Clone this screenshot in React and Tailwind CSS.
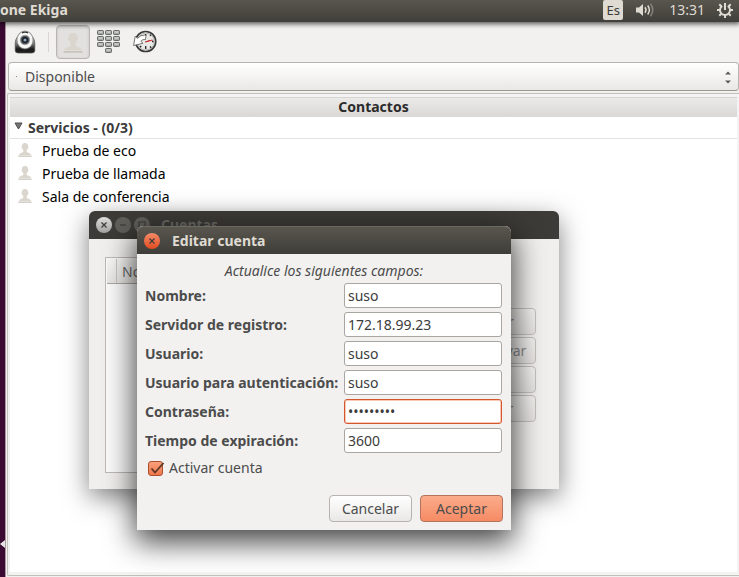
import React from "react";

function Webcam() {
  return (
    <svg width="22" height="24" viewBox="0 0 22 24" aria-hidden="true">
      <defs>
        <linearGradient id="camBase" x1="0" y1="0" x2="0" y2="1">
          <stop offset="0" stopColor="#c8c8c6" />
          <stop offset="0.35" stopColor="#8a8a88" />
          <stop offset="0.75" stopColor="#1a1a1a" />
          <stop offset="1" stopColor="#222" />
        </linearGradient>
        <radialGradient id="camBody">
          <stop offset="0.5" stopColor="#fff" />
          <stop offset="0.85" stopColor="#f4f4f2" />
          <stop offset="1" stopColor="#c4c4c2" />
        </radialGradient>
      </defs>
      <path d="M3.500 7h15q2.300 2.500 2.300 6v7.500q0 2.500-3 2.500H4.200q-3 0-3-2.500V13q0-3.500 2.300-6z" fill="url(#camBase)" stroke="#555" strokeWidth=".7" />
      <ellipse cx="11" cy="10" rx="8.200" ry="9" fill="url(#camBody)" stroke="#777" strokeWidth=".7" />
      <circle cx="11" cy="10" r="4.800" fill="#50565c" stroke="#aaa" strokeWidth=".8" />
      <circle cx="11" cy="10" r="3" fill="#151b22" />
      <circle cx="11" cy="10" r="1.600" fill="#8fa6bd" />
      <path d="M8 2.800q3-1.300 6 0" fill="none" stroke="#333" strokeWidth="1.300" />
    </svg>
  );
}

function Person({ size }) {
  return (
    <svg width={size} height={size} viewBox="0 0 20 20" aria-hidden="true">
      <path
        d="M10 0c-3.200 0-4.600 2-4.500 4.800-.9.700-.4 2.400.4 2.700.3 1.400.9 2.400 1.700 3v2.200c-1.600 1.400-5.600 1.300-6.300 4.300h17.400c-.7-3-4.700-2.900-6.300-4.300v-2.200c.8-.6 1.400-1.600 1.700-3 .8-.3 1.300-2 .4-2.700C14.600 2 13.200 0 10 0z"
        fill="#dad5cd"
      />
      <path d="M.5 18.800h19" stroke="#c8c3bb" strokeWidth="1.800" />
    </svg>
  );
}

function Keypad() {
  const keys = [];
  for (let r = 0; r < 3; r++) for (let c = 0; c < 3; c++) keys.push([c * 8 + 0.5, r * 6 + 0.5]);
  keys.push([8.5, 18.5]);
  return (
    <svg width="24" height="24" viewBox="0 0 24 24" aria-hidden="true">
      {keys.map(([x, y]) => (
        <g key={`${x}-${y}`}>
          <rect x={x} y={y} width="6" height="4" rx=".8" fill="#a5a8a3" stroke="#666963" />
          <path d={`M${x + 1} ${y + 1.5}h4`} stroke="#e6e7e4" />
        </g>
      ))}
    </svg>
  );
}

function History() {
  return (
    <svg width="24" height="24" viewBox="0 0 24 24" aria-hidden="true">
      <circle cx="12.700" cy="11.500" r="10" fill="#e9e9e6" stroke="#3a3a3a" strokeWidth="1.700" />
      <circle cx="12.700" cy="11.500" r="8.500" fill="none" stroke="#b5b5b2" />
      <path d="M12.700 4v1.800M12.700 16v3M19 11.500h1.500M17 5.800l.9-1M17 16.500l1.200 1.200M7 17.200l1.200-1.200" stroke="#222" strokeWidth="1.300" />
      <path d="M12.500 12l7-2" stroke="#e02b2b" strokeWidth="1.100" />
      <path d="M12 12l5-1.700" stroke="#a33" strokeWidth=".8" />
      <path d="M.6 15.500L2.200 6.300l2.300 2Q7.500 4.800 12 5l1 .5-.5 4q-3-.5-4.700 1.800l2.200 2z" fill="#fff" stroke="#666" strokeWidth=".9" />
    </svg>
  );
}

function Volume() {
  return (
    <svg width="20" height="16" viewBox="0 0 20 16" fill="none" stroke="#dfdbd2" strokeWidth="1.500" aria-hidden="true">
      <path d="M1 5.500h3L8 2v12L4 10.500H1z" fill="#dfdbd2" stroke="none" />
      <path d="M10 5.300q2 2.700 0 5.400" />
      <path d="M12.700 3.500q3.400 4.500 0 9" />
      <path d="M15.500 1.700q4.600 6.300 0 12.600" stroke="#85827a" />
    </svg>
  );
}

function Power() {
  return (
    <svg width="16" height="16" viewBox="0 0 16 16" fill="none" stroke="#dfdbd2" aria-hidden="true">
      <path d="M5.200 3.900a5 5 0 1 0 5.600 0" strokeWidth="1.900" />
      <path d="M8 1v7" strokeWidth="2" />
      <path d="M0 8h3M13 8h3M2.300 13.700L4.200 11.800M11.800 11.800l1.900 1.900M8 13v3M2.300 2.300l1.900 1.900M11.800 4.200l1.900-1.900" strokeWidth="2" />
    </svg>
  );
}

function TopBar() {
  return (
    <header className="relative z-10 flex h-[22px] items-center justify-between bg-linear-to-b from-[#59564e] to-[#403f3a] pr-1.5 shadow-[0_1px_5px_1px_rgba(0,0,0,0.65)]">
      <h1 className="pb-0.5 text-[14px] leading-4 font-bold text-[#dfdbd2]">one Ekiga</h1>
      <div className="flex items-center gap-3 pb-0.5 text-[14px] leading-4 text-[#dfdbd2]">
        <span className="flex h-5 w-5 items-center justify-center rounded-xs bg-[#dfdbd2] text-[13px] text-[#3c3b37]">Es</span>
        <Volume />
        <time className="ml-0.5">13:31</time>
        <Power />
      </div>
    </header>
  );
}

const tool = "flex items-center justify-center";

function Toolbar() {
  return (
    <div className="flex h-10 items-center pl-2">
      <button type="button" aria-label="Cámara" className={`${tool} h-8 w-[22px]`}>
        <Webcam />
      </button>
      <span className="ml-3 h-5 w-px bg-[#d8d5d2]" />
      <button type="button" aria-label="Contactos" className={`${tool} ml-[7px] h-[34px] w-[34px] rounded border border-[#b9b5b1] bg-[#e3e1df] pt-0.5 shadow-[inset_0_1px_3px_rgba(0,0,0,0.15)]`}>
        <Person size={20} />
      </button>
      <button type="button" aria-label="Teclado" className={`${tool} ml-[7px] h-8 w-6`}>
        <Keypad />
      </button>
      <button type="button" aria-label="Historial" className={`${tool} ml-3 h-8 w-6`}>
        <History />
      </button>
    </div>
  );
}

function StatusSelect() {
  return (
    <div className="relative ml-0.5">
      <select aria-label="Estado" className="block h-[29px] w-full appearance-none rounded border border-[#b7b3ae] border-b-[#9b9791] bg-linear-to-b from-white to-[#e9e8e6] pl-4 text-[14px] leading-5 text-[#4c4c4c] outline-none">
        <option>Disponible</option>
      </select>
      <svg className="pointer-events-none absolute top-2 right-2" width="6" height="14" viewBox="0 0 6 14" fill="#5a5a5a" aria-hidden="true">
        <path d="M0 4.500L3 1.500 6 4.500zM0 10.500h6l-3 3z" />
      </svg>
      <span className="absolute top-[14px] left-2 h-px w-px bg-[#888]" />
    </div>
  );
}

const contacts = ["Prueba de eco", "Prueba de llamada", "Sala de conferencia"];

function ContactList() {
  return (
    <section className="mt-0.5 mb-px ml-px flex grow flex-col rounded-l-xs border border-r-0 border-[#c3bfbb] bg-[#f4f3f3] py-[3px] pr-0.5 pl-0.5">
      <div className="grow bg-white">
        <h2 className="h-5 border-t border-[#d5d3d0] bg-linear-to-b from-[#ebeae9] to-[#dad8d6] text-center text-[14px] leading-[18px] font-bold text-[#2b2b2b]">Contactos</h2>
        <button type="button" className="flex h-[22px] w-full items-center border-b border-[#e2e2e2] pl-1 text-[14px] leading-5 font-bold text-[#3c3c3c]">
          <svg width="9" height="8" viewBox="0 0 9 8" className="mr-[5px] mb-1" aria-hidden="true">
            <path d="M1 1h7L4.500 7z" fill="#777" stroke="#4c4c4c" />
          </svg>
          Servicios - (0/3)
        </button>
        <ul>
          {contacts.map((name) => (
            <li key={name} className="flex h-[23px] items-center gap-2.5 pl-2 text-[14px] leading-5 text-black">
              <span className="pb-0.5">
                <Person size={14} />
              </span>
              {name}
            </li>
          ))}
        </ul>
      </div>
    </section>
  );
}

function WindowButton({ label, className, children }) {
  return (
    <button type="button" aria-label={label} className={`flex h-4 w-4 items-center justify-center rounded-full ${className}`}>
      <svg width="8" height="8" viewBox="0 0 8 8" fill="none" stroke="#3c3b37" strokeWidth="1.200" aria-hidden="true">
        {children}
      </svg>
    </button>
  );
}

const sideButton = "h-[27px] rounded border border-[#c4c1bd] bg-linear-to-b from-[#f3f2f1] to-[#e6e4e2] text-[14px] leading-5 text-[#8c8c8c]";

function AccountsWindow() {
  return (
    <section aria-label="Cuentas" className="absolute top-[211px] left-[89px] flex h-[278px] w-[470px] flex-col rounded-t-md bg-[#f0efed] shadow-[0_8px_26px_rgba(0,0,0,0.5)]">
      <header className="flex h-7 items-center gap-[3px] rounded-t-md bg-[#3c3b37] pl-[7px]">
        <WindowButton label="Cerrar cuentas" className="bg-linear-to-b from-[#dededc] to-[#a3a29f]">
          <path d="M1.500 1.500l5 5M6.500 1.500l-5 5" />
        </WindowButton>
        <WindowButton label="Minimizar" className="bg-[#605f5a]">
          <path d="M1 4h6" />
        </WindowButton>
        <WindowButton label="Maximizar" className="bg-[#605f5a]">
          <path d="M1 1h6v6H1z" />
        </WindowButton>
        <h2 className="ml-2 text-[14px] leading-5 font-bold text-[#6d6b66]">Cuentas</h2>
      </header>
      <div className="flex grow items-center gap-2 pt-[18px] pr-[23px] pb-4 pl-4">
        <div className="grow self-stretch border border-[#bdb9b4] bg-[#fafafa] p-px">
          <div className="flex h-[25px] border-b border-[#aaa7a3] bg-linear-to-b from-[#f7f7f6] to-[#e6e5e3] text-[14px] leading-[25px] text-[#6b6b6b]">
            <span className="w-[10px] border-r border-[#c9c6c2]" />
            <span className="pl-[5px]">Nombre</span>
          </div>
        </div>
        <div className="flex w-[88px] flex-col gap-0.5">
          <button type="button" className={sideButton}>Añadir</button>
          <button type="button" className={sideButton}>Desactivar</button>
          <button type="button" className={sideButton}>Editar</button>
          <button type="button" className={sideButton}>Borrar</button>
        </div>
      </div>
    </section>
  );
}

const fields = [
  { id: "nombre", label: "Nombre:", value: "suso" },
  { id: "servidor", label: "Servidor de registro:", value: "172.18.99.23" },
  { id: "usuario", label: "Usuario:", value: "suso" },
  { id: "autenticacion", label: "Usuario para autenticación:", value: "suso" },
  { id: "contrasena", label: "Contraseña:", value: "123456789", type: "password", active: true },
  { id: "expiracion", label: "Tiempo de expiración:", value: "3600" },
];

function EditDialog() {
  return (
    <section role="dialog" aria-label="Editar cuenta" className="absolute top-[226px] left-[137px] w-[374px] rounded-t-md bg-[#f2f1f0] text-[14px] leading-5 text-[#4c4c4c] shadow-[0_10px_30px_2px_rgba(0,0,0,0.75)]">
      <header className="flex h-7 items-center gap-3 rounded-t-md border-t border-[#6b6960] bg-linear-to-b from-[#59564e] to-[#3e3d39] pl-[7px]">
        <WindowButton label="Cerrar" className="bg-linear-to-b from-[#f58a66] to-[#df4b1c]">
          <path d="M1.500 1.500l5 5M6.500 1.500l-5 5" />
        </WindowButton>
        <h2 className="font-bold text-[#dfdbd2]">Editar cuenta</h2>
      </header>
      <form className="px-2 pt-[7px] pb-2" onSubmit={(e) => e.preventDefault()}>
        <p className="mb-0.5 text-center italic">Actualice los siguientes campos:</p>
        <div className="flex flex-col gap-1 pr-px">
          {fields.map((f) => (
            <div key={f.id} className="flex items-center justify-between">
              <label htmlFor={f.id} className="font-bold whitespace-nowrap">{f.label}</label>
              <input
                id={f.id}
                type={f.type || "text"}
                defaultValue={f.value}
                className={`h-[25px] w-[158px] rounded-[3px] border bg-white px-[3px] text-[#3c3c3c] outline-none ${f.active ? "border-[#d4562c] shadow-[inset_0_0_0_1px_#f9c9b5]" : "border-[#a9a5a0]"}`}
              />
            </div>
          ))}
        </div>
        <div className="mt-[5px] flex items-center gap-1.5 pl-[3px]">
          <span className="relative flex">
            <input id="activar" type="checkbox" defaultChecked className="h-[15px] w-[15px] appearance-none rounded-[3px] border border-[#a84f30] bg-linear-to-b from-[#f9a07c] to-[#ee7748]" />
            <svg className="pointer-events-none absolute top-0 left-0" width="17" height="15" viewBox="0 0 17 15" fill="none" aria-hidden="true">
              <path d="M3.500 7.500l3.500 4L15.500 2" stroke="#5a3626" strokeWidth="1.800" />
            </svg>
          </span>
          <label htmlFor="activar">Activar cuenta</label>
        </div>
        <div className="mt-[17px] flex justify-end gap-2">
          <button type="button" className="h-[27px] w-[83px] rounded border border-[#b7b3ae] bg-linear-to-b from-white to-[#e9e8e6]">Cancelar</button>
          <button type="submit" className="h-[27px] w-[83px] rounded border border-[#b5735c] bg-linear-to-b from-[#fbab8b] to-[#f58b64]">Aceptar</button>
        </div>
      </form>
    </section>
  );
}

export default function App() {
  return (
    <div className="relative flex min-h-screen flex-col overflow-hidden bg-[#3b0a33] font-['Noto_Sans','Open_Sans',sans-serif]">
      <TopBar />
      <div className="flex grow">
        <aside className="flex w-1.5 flex-col justify-end border-r border-[#a9949f] pb-7">
          <svg width="5" height="10" viewBox="0 0 5 10" aria-hidden="true">
            <path d="M0 5l5-4v8z" fill="#e8e4e6" />
          </svg>
        </aside>
        <main className="flex min-w-0 grow flex-col bg-[#f2f1f0]">
          <Toolbar />
          <StatusSelect />
          <ContactList />
        </main>
      </div>
      <AccountsWindow />
      <EditDialog />
    </div>
  );
}
